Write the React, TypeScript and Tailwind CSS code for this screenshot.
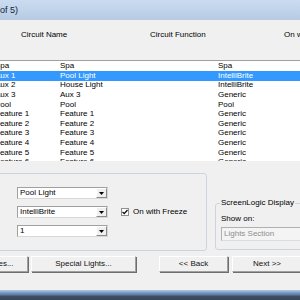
import React from "react";

const rows: [string, string, string][] = [
  ["Spa", "Spa", "Spa"],
  ["Aux 1", "Pool Light", "IntelliBrite"],
  ["Aux 2", "House Light", "IntelliBrite"],
  ["Aux 3", "Aux 3", "Generic"],
  ["Pool", "Pool", "Pool"],
  ["Feature 1", "Feature 1", "Generic"],
  ["Feature 2", "Feature 2", "Generic"],
  ["Feature 3", "Feature 3", "Generic"],
  ["Feature 4", "Feature 4", "Generic"],
  ["Feature 5", "Feature 5", "Generic"],
  ["Feature 6", "Feature 6", "Generic"],
];

function Combo({ value }: { value: string }) {
  return (
    <div className="w-[91px] h-[12px] shrink-0 bg-white border border-t-[#a0a0a0] border-l-[#a0a0a0] border-r-[#d8d8d8] border-b-[#d8d8d8] flex items-center justify-between">
      <span className="pl-[2px] whitespace-nowrap">{value}</span>
      <div className="w-[11px] h-[10px] bg-[#f0f0f0] border border-t-white border-l-white border-r-[#8a8a8a] border-b-[#8a8a8a] flex items-center justify-center">
        <svg width="5" height="3" viewBox="0 0 5 3">
          <polygon points="0,0 5,0 2.5,3" fill="#000" />
        </svg>
      </div>
    </div>
  );
}

function Btn({ label, className }: { label: string; className: string }) {
  return (
    <div
      className={
        "h-[16px] shrink-0 bg-[#f0f0f0] border border-t-white border-l-white border-r-[#a0a0a0] border-b-[#a0a0a0] shadow-[1px_1px_0_#6e6e6e] flex items-center justify-center whitespace-nowrap text-[#111] " +
        className
      }
    >
      {label}
    </div>
  );
}

export default function App() {
  return (
    <div className="w-[300px] h-[300px] overflow-hidden bg-[#f0f0f0] flex flex-col text-[8px] leading-none text-black font-['Liberation_Sans',Arial,sans-serif]">
      {/* Title bar */}
      <div className="h-[20px] shrink-0 bg-[linear-gradient(to_bottom,#cadcf0,#b6cbe4)] flex items-center">
        <div className="w-[18px] shrink-0 flex justify-end">
          <span className="whitespace-nowrap text-[9px] text-[#15243a]">Circuit Setup (1 of 5)</span>
        </div>
      </div>

      {/* Header */}
      <div className="h-[40px] shrink-0 bg-[#f0f0f0] flex pt-[11px] pl-[21px] whitespace-nowrap">
        <span className="w-[129px] shrink-0">Circuit Name</span>
        <span className="w-[134px] shrink-0">Circuit Function</span>
        <span className="shrink-0">On with Freeze</span>
      </div>
      <div className="h-[1px] shrink-0 bg-[#a0a0a0]" />

      {/* List */}
      <div className="h-[100px] shrink-0 bg-white overflow-hidden pt-[0.5px]">
        {rows.map((r, i) => (
          <div
            key={i}
            className={
              "h-[9.6px] flex items-center whitespace-nowrap " +
              (i === 1 ? "bg-[#3399ff] text-white" : "")
            }
          >
            <span className="ml-[-5px] w-[65px] shrink-0">{r[0]}</span>
            <span className="w-[158px] shrink-0">{r[1]}</span>
            <span className="shrink-0">{r[2]}</span>
          </div>
        ))}
      </div>

      {/* Bottom area */}
      <div className="flex-1 flex flex-col pt-[12px]">
        <div className="h-[78px] shrink-0 flex items-start">
          {/* Group 1 */}
          <div className="ml-[-10px] w-[217px] h-[78px] shrink-0 border border-[#cdd5dc] rounded-[3px] pl-[26px] pt-[13px] flex flex-col gap-[7px]">
            <Combo value="Pool Light" />
            <div className="flex items-center">
              <Combo value="IntelliBrite" />
              <div className="ml-[13px] w-[8px] h-[8px] shrink-0 bg-white border border-[#8e8f8f] flex items-center justify-center">
                <svg width="6" height="6" viewBox="0 0 6 6">
                  <polyline points="0.5,2.8 2.2,4.6 5.5,1" fill="none" stroke="#000" strokeWidth="1.2" />
                </svg>
              </div>
              <span className="ml-[4px] whitespace-nowrap">On with Freeze</span>
            </div>
            <Combo value="1" />
          </div>

          {/* Group 2 */}
          <div className="relative ml-[8px] mt-[30px] w-[100px] h-[47px] shrink-0 border border-[#cdd5dc] rounded-[3px] pl-[5px] pt-[11px] flex flex-col">
            <span className="absolute top-[-5px] left-[4px] px-[1px] bg-[#f0f0f0] whitespace-nowrap">ScreenLogic Display</span>
            <span className="whitespace-nowrap">Show on:</span>
            <div className="mt-[4px] h-[14px] bg-[#f4f4f4] border border-t-[#b0b0b0] border-l-[#b0b0b0] border-r-[#dcdcdc] border-b-[#dcdcdc] flex items-center pl-[2px] text-[#8e8e8e] whitespace-nowrap">
              Lights Section
            </div>
          </div>
        </div>

        {/* Buttons */}
        <div className="mt-[5px] h-[16px] shrink-0 flex">
          <Btn label="Properties..." className="ml-[-44px] w-[72px]" />
          <Btn label="Special Lights..." className="ml-[3px] w-[105px]" />
          <Btn label="<< Back" className="ml-[23px] w-[69px]" />
          <Btn label="Next >>" className="ml-[4px] w-[70px] border-[#5a5a5a]" />
        </div>
      </div>

      {/* Window frame bottom */}
      <div className="h-[10px] shrink-0 bg-[linear-gradient(to_bottom,#b4c8e0_0%,#7d9dc7_25%,#5f7fa9_45%,#3e4d63_65%,#394558_100%)]" />
    </div>
  );
}
